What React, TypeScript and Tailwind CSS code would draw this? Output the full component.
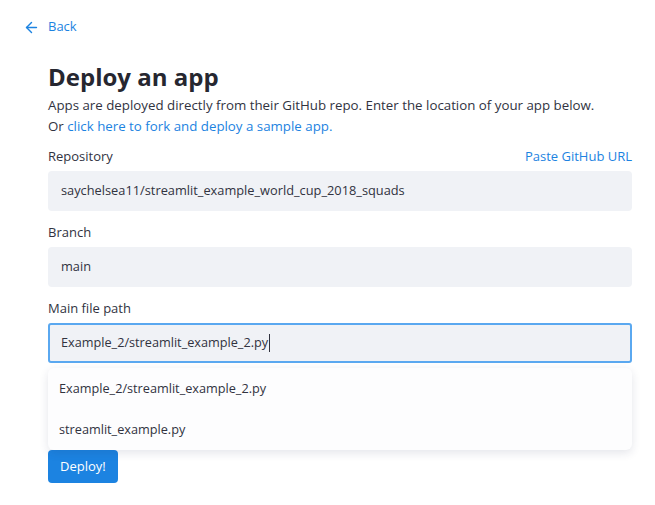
import { ArrowLeft } from 'lucide-react'

const font = { fontFamily: '"Open Sans", "Noto Sans", sans-serif' }

function Field({ label, value, right }: { label: string; value: string; right?: string }) {
  return (
    <div className="flex flex-col">
      <div className="flex h-[20px] items-center justify-between text-[13px] text-[#31333f]">
        <span>{label}</span>
        {right && <span className="text-[#1c83e1]">{right}</span>}
      </div>
      <div className="mt-[4px] flex h-[40px] items-center rounded-[4px] bg-[#f0f2f6] px-[13px] text-[12.8px] text-[#31333f]">
        {value}
      </div>
    </div>
  )
}

export default function App() {
  return (
    <div className="min-h-[505px] w-[655px] bg-white" style={font}>
      <div className="flex h-[53px] items-center gap-[8px] pl-[23px] pt-[1px] text-[13px] text-[#1c83e1]">
        <ArrowLeft className="h-[17px] w-[17px]" strokeWidth={2} />
        <span>Back</span>
      </div>
      <div className="ml-[48px] w-[584px]">
        <h1 className="mt-[9px] text-[24px] font-bold leading-[30px] text-[#262730]">Deploy an app</h1>
        <p className="mt-[3px] text-[13.3px] leading-[21px] text-[#31333f]">
          Apps are deployed directly from their GitHub repo. Enter the location of your app below.
        </p>
        <p className="text-[13.3px] leading-[21px] text-[#31333f]">
          Or <span className="text-[#1c83e1]">click here to fork and deploy a sample app.</span>
        </p>
        <div className="mt-[10px] flex flex-col gap-[12px]">
          <Field label="Repository" value="saychelsea11/streamlit_example_world_cup_2018_squads" right="Paste GitHub URL" />
          <Field label="Branch" value="main" />
          <div className="flex flex-col">
            <div className="flex h-[20px] items-center text-[13px] text-[#31333f]">Main file path</div>
            <div className="mt-[4px] flex h-[40px] items-center rounded-[3px] border-2 border-[#5aa8f0] bg-[#f0f2f6] px-[11px] text-[12.7px] text-[#31333f]">
              Example_2/streamlit_example_2.py
              <span className="ml-[1px] inline-block h-[18px] w-px bg-[#31333f]" />
            </div>
          </div>
        </div>
        <div className="relative">
          <div className="absolute left-0 right-0 top-[5px] z-10 rounded-[6px] bg-[#fdfdfe] shadow-[0_3px_10px_rgba(30,40,80,0.12)]">
            <div className="flex h-[41px] items-center px-[11px] text-[12.7px] text-[#31333f]">Example_2/streamlit_example_2.py</div>
            <div className="flex h-[41px] items-center px-[11px] text-[12.7px] text-[#31333f]">streamlit_example.py</div>
          </div>
          <div className="pt-[87px]">
            <button className="h-[33px] rounded-[4px] bg-[#1c83e1] px-[12px] text-[13px] text-white">Deploy!</button>
          </div>
        </div>
      </div>
    </div>
  )
}
